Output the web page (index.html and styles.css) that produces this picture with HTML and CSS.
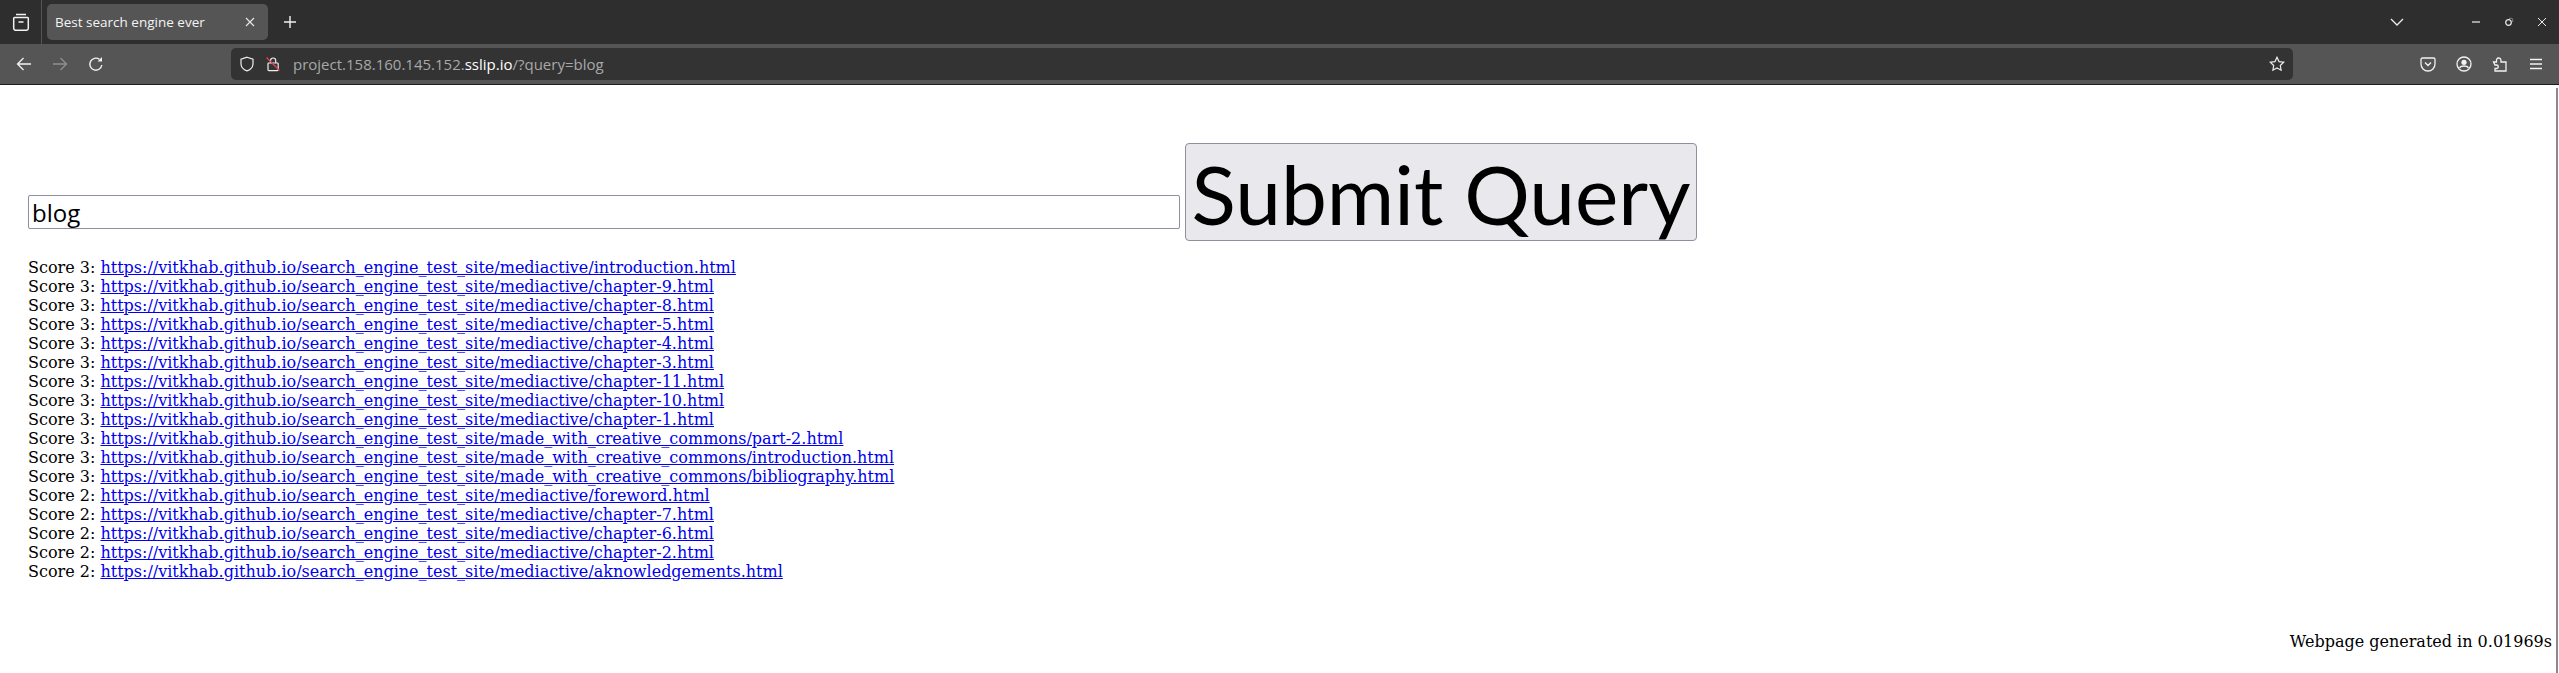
FILE: index.html
```html
<!DOCTYPE html>
<html lang="en">
<head>
  <meta charset="UTF-8">
  <title>Best search engine ever</title>
  <link rel="stylesheet" href="styles.css">
</head>
<body>

  <!-- browser frame -->
  <div class="tabbar">
    <div class="tabs-btn">
      <svg width="18" height="18" viewBox="0 0 18 18" fill="none" stroke="#f2f2f2" stroke-width="1.5"><path d="M4 1.500h10M2.500 4.500h13a.8.8 0 0 1 .8.8v10a2 2 0 0 1-2 2H3.700a2 2 0 0 1-2-2V5.300a.8.8 0 0 1 .8-.8zM6.500 9h5"/></svg>
    </div>
    <div class="tab">
      <span class="tab-title">Best search engine ever</span>
      <svg width="12" height="12" viewBox="0 0 12 12" stroke="#e8e8e8" stroke-width="1.1"><path d="M2 2l8 8M10 2l-8 8"/></svg>
    </div>
    <div class="new-tab">
      <svg width="14" height="14" viewBox="0 0 14 14" stroke="#f2f2f2" stroke-width="1.4"><path d="M7 1v12M1 7h12"/></svg>
    </div>
    <div class="spacer"></div>
    <div class="win-btns">
      <svg class="chevron" width="14" height="10" viewBox="0 0 14 10" fill="none" stroke="#eee" stroke-width="1.3"><path d="M1 2l6 6 6-6"/></svg>
      <svg width="10" height="10" viewBox="0 0 10 10" stroke="#eee" stroke-width="1.2"><path d="M1 5h8"/></svg>
      <svg width="10" height="10" viewBox="0 0 10 10" fill="none" stroke="#eee"><circle cx="4.500" cy="5.500" r="2.800" stroke-width="1.2"/><path d="M5 1.300h2.500a1.200 1.200 0 0 1 1.200 1.200V5" stroke="#999" stroke-width=".8"/></svg>
      <svg width="10" height="10" viewBox="0 0 10 10" stroke="#eee" stroke-width="1"><path d="M1 1l8 8M9 1l-8 8"/></svg>
    </div>
  </div>

  <div class="toolbar">
    <div class="nav-btns">
      <svg width="16" height="16" viewBox="0 0 16 16" fill="none" stroke="#f2f2f2" stroke-width="1.3"><path d="M15 8H1.500M7.500 2l-6 6 6 6"/></svg>
      <svg width="16" height="16" viewBox="0 0 16 16" fill="none" stroke="#8e8e8e" stroke-width="1.3"><path d="M1 8h13.500M8.500 2l6 6-6 6"/></svg>
      <svg width="16" height="16" viewBox="0 0 16 16" fill="none" stroke="#f2f2f2" stroke-width="1.4"><path d="M13.800 9a6 6 0 1 1-2.300-5.600"/><path d="M14 1v4.600H9.600z" fill="#f2f2f2" stroke="none"/></svg>
    </div>
    <div class="urlbar">
      <svg width="16" height="16" viewBox="0 0 16 16" fill="none" stroke="#eee" stroke-width="1.2"><path d="M8 1.200l6 2v4.600c0 3.500-2.600 6-6 7-3.400-1-6-3.500-6-7V3.200z"/></svg>
      <svg class="lock" width="16" height="16" viewBox="0 0 16 16" fill="none"><path d="M5.500 7V4.600a2.600 2.600 0 0 1 5.200 0V7M3.800 7h8.600a.8.8 0 0 1 .8.8v6a.8.8 0 0 1-.8.8H3.800a.8.8 0 0 1-.8-.8v-6a.8.8 0 0 1 .8-.8z" stroke="#eee" stroke-width="1.2"/><path d="M1.500 1.500l13 13" stroke="#e0405e" stroke-width="1.2"/></svg>
      <span class="url">project.158.160.145.152.<b>sslip.io</b>/?query=blog</span>
      <svg class="star" width="16" height="16" viewBox="0 0 16 16" fill="none" stroke="#eee" stroke-width="1.2"><path d="M8 1.300l2 4.300 4.700.6-3.400 3.300.8 4.700L8 12l-4.100 2.200.8-4.700L1.300 6.200 6 5.600z"/></svg>
    </div>
    <div class="tool-btns">
      <svg width="16" height="16" viewBox="0 0 16 16" fill="none" stroke="#f2f2f2" stroke-width="1.3"><path d="M2.400 2h11.200A1.400 1.400 0 0 1 15 3.400V8a7 7 0 0 1-14 0V3.400A1.400 1.400 0 0 1 2.400 2zM5 6.500l3 3 3-3"/></svg>
      <svg width="16" height="16" viewBox="0 0 16 16" fill="none" stroke="#f2f2f2" stroke-width="1.3"><circle cx="8" cy="8" r="7"/><circle cx="8" cy="6.300" r="2.600" fill="#f2f2f2" stroke="none"/><path d="M3.500 11.800c1-1.300 2.500-1.800 4.500-1.800s3.500.5 4.500 1.800" stroke-width="1.600"/></svg>
      <svg width="16" height="16" viewBox="0 0 16 16" fill="none" stroke="#f2f2f2" stroke-width="1.3"><path d="M1.500 6h3V4.500a2.200 2.200 0 0 1 4.400-.6L9 6h5v9H3v-2.500h1.500a1.500 1.500 0 0 0 0-3.500H3z"/></svg>
      <svg width="16" height="16" viewBox="0 0 16 16" stroke="#f2f2f2" stroke-width="1.3"><path d="M2 3.500h12M2 8h12M2 12.500h12"/></svg>
    </div>
  </div>

  <!-- page itself -->
  <div class="page">
    <form class="search" onsubmit="return false">
      <input class="query" type="text" name="query" value="blog">
      <input class="submit" type="submit" value="Submit Query">
    </form>

    <div class="results">
      <div>Score 3: <a href="#">https://vitkhab.github.io/search_engine_test_site/mediactive/introduction.html</a></div>
      <div>Score 3: <a href="#">https://vitkhab.github.io/search_engine_test_site/mediactive/chapter-9.html</a></div>
      <div>Score 3: <a href="#">https://vitkhab.github.io/search_engine_test_site/mediactive/chapter-8.html</a></div>
      <div>Score 3: <a href="#">https://vitkhab.github.io/search_engine_test_site/mediactive/chapter-5.html</a></div>
      <div>Score 3: <a href="#">https://vitkhab.github.io/search_engine_test_site/mediactive/chapter-4.html</a></div>
      <div>Score 3: <a href="#">https://vitkhab.github.io/search_engine_test_site/mediactive/chapter-3.html</a></div>
      <div>Score 3: <a href="#">https://vitkhab.github.io/search_engine_test_site/mediactive/chapter-11.html</a></div>
      <div>Score 3: <a href="#">https://vitkhab.github.io/search_engine_test_site/mediactive/chapter-10.html</a></div>
      <div>Score 3: <a href="#">https://vitkhab.github.io/search_engine_test_site/mediactive/chapter-1.html</a></div>
      <div>Score 3: <a href="#">https://vitkhab.github.io/search_engine_test_site/made_with_creative_commons/part-2.html</a></div>
      <div>Score 3: <a href="#">https://vitkhab.github.io/search_engine_test_site/made_with_creative_commons/introduction.html</a></div>
      <div>Score 3: <a href="#">https://vitkhab.github.io/search_engine_test_site/made_with_creative_commons/bibliography.html</a></div>
      <div>Score 2: <a href="#">https://vitkhab.github.io/search_engine_test_site/mediactive/foreword.html</a></div>
      <div>Score 2: <a href="#">https://vitkhab.github.io/search_engine_test_site/mediactive/chapter-7.html</a></div>
      <div>Score 2: <a href="#">https://vitkhab.github.io/search_engine_test_site/mediactive/chapter-6.html</a></div>
      <div>Score 2: <a href="#">https://vitkhab.github.io/search_engine_test_site/mediactive/chapter-2.html</a></div>
      <div>Score 2: <a href="#">https://vitkhab.github.io/search_engine_test_site/mediactive/aknowledgements.html</a></div>
    </div>

    <div class="generated">Webpage generated in 0.01969s</div>
    <div class="scrollbar"></div>
  </div>

</body>
</html>
```

FILE: styles.css
```css
html, body {
  margin: 0;
  padding: 0;
  height: 100%;
  overflow: hidden;
  background: #fff;
}

body {
  font-family: "DejaVu Serif", serif;
  font-size: 16px;
  color: #000;
}

svg {
  display: block;
  flex: none;
}

/* browser frame */
.tabbar {
  display: flex;
  align-items: center;
  height: 44px;
  background: #2e2e2e;
}

.tabs-btn {
  display: flex;
  align-items: center;
  justify-content: center;
  width: 41px;
  height: 44px;
  border-right: 1px solid #555;
}

.tab {
  display: flex;
  align-items: center;
  justify-content: space-between;
  box-sizing: border-box;
  width: 221px;
  height: 36px;
  margin-left: 5px;
  padding: 0 12px 0 8px;
  background: #555;
  border-radius: 5px;
}

.tab-title {
  font-family: "Open Sans", sans-serif;
  font-size: 13.5px;
  color: #f4f4f4;
}

.new-tab {
  margin-left: 15px;
}

.spacer {
  flex: 1;
}

.win-btns {
  display: flex;
  align-items: center;
  gap: 23px;
  padding-right: 12px;
}

.chevron {
  margin-right: 44px;
}

.toolbar {
  display: flex;
  align-items: center;
  height: 40px;
  background: #555;
  border-bottom: 1px solid #1c1c1c;
}

.nav-btns {
  display: flex;
  gap: 20px;
  width: 231px;
  padding-left: 16px;
  box-sizing: border-box;
}

.urlbar {
  display: flex;
  align-items: center;
  box-sizing: border-box;
  width: 2062px;
  height: 32px;
  padding: 0 8px 0 8px;
  background: #333;
  border-radius: 5px;
}

.lock {
  margin-left: 10px;
}

.url {
  flex: 1;
  margin-left: 12px;
  font-family: "Open Sans", sans-serif;
  font-size: 15px;
  color: #a8a8a8;
}

.url b {
  font-weight: normal;
  color: #fff;
}

.tool-btns {
  display: flex;
  gap: 20px;
  padding-left: 127px;
}

/* page */
.page {
  position: relative;
  height: 588px;
  padding: 58px 7px 0 28px;
  box-sizing: border-box;
}

.search {
  display: flex;
  align-items: flex-end;
  gap: 5px;
  margin: 0 0 17px;
  height: 98px;
}

.query {
  box-sizing: border-box;
  width: 1152px;
  height: 34px;
  margin-bottom: 12px;
  padding: 1px 3px;
  font-family: "Open Sans", sans-serif;
  font-size: 24px;
  color: #000;
  background: #fff;
  border: 1px solid #8f8f9d;
  border-radius: 2px;
  outline: none;
}

.submit {
  box-sizing: border-box;
  width: 512px;
  height: 98px;
  padding: 0;
  font-family: Lato, sans-serif;
  font-size: 82px;
  color: #000;
  background: #e9e9ed;
  border: 1px solid #8f8f9d;
  border-radius: 4px;
}

.results {
  line-height: 19px;
}

.results a {
  color: #00e;
}

.generated {
  margin-top: 51px;
  line-height: 19px;
  text-align: right;
}

.scrollbar {
  position: absolute;
  top: 3px;
  right: 1px;
  bottom: 0;
  width: 2px;
  background: #8a8a8a;
}
```
